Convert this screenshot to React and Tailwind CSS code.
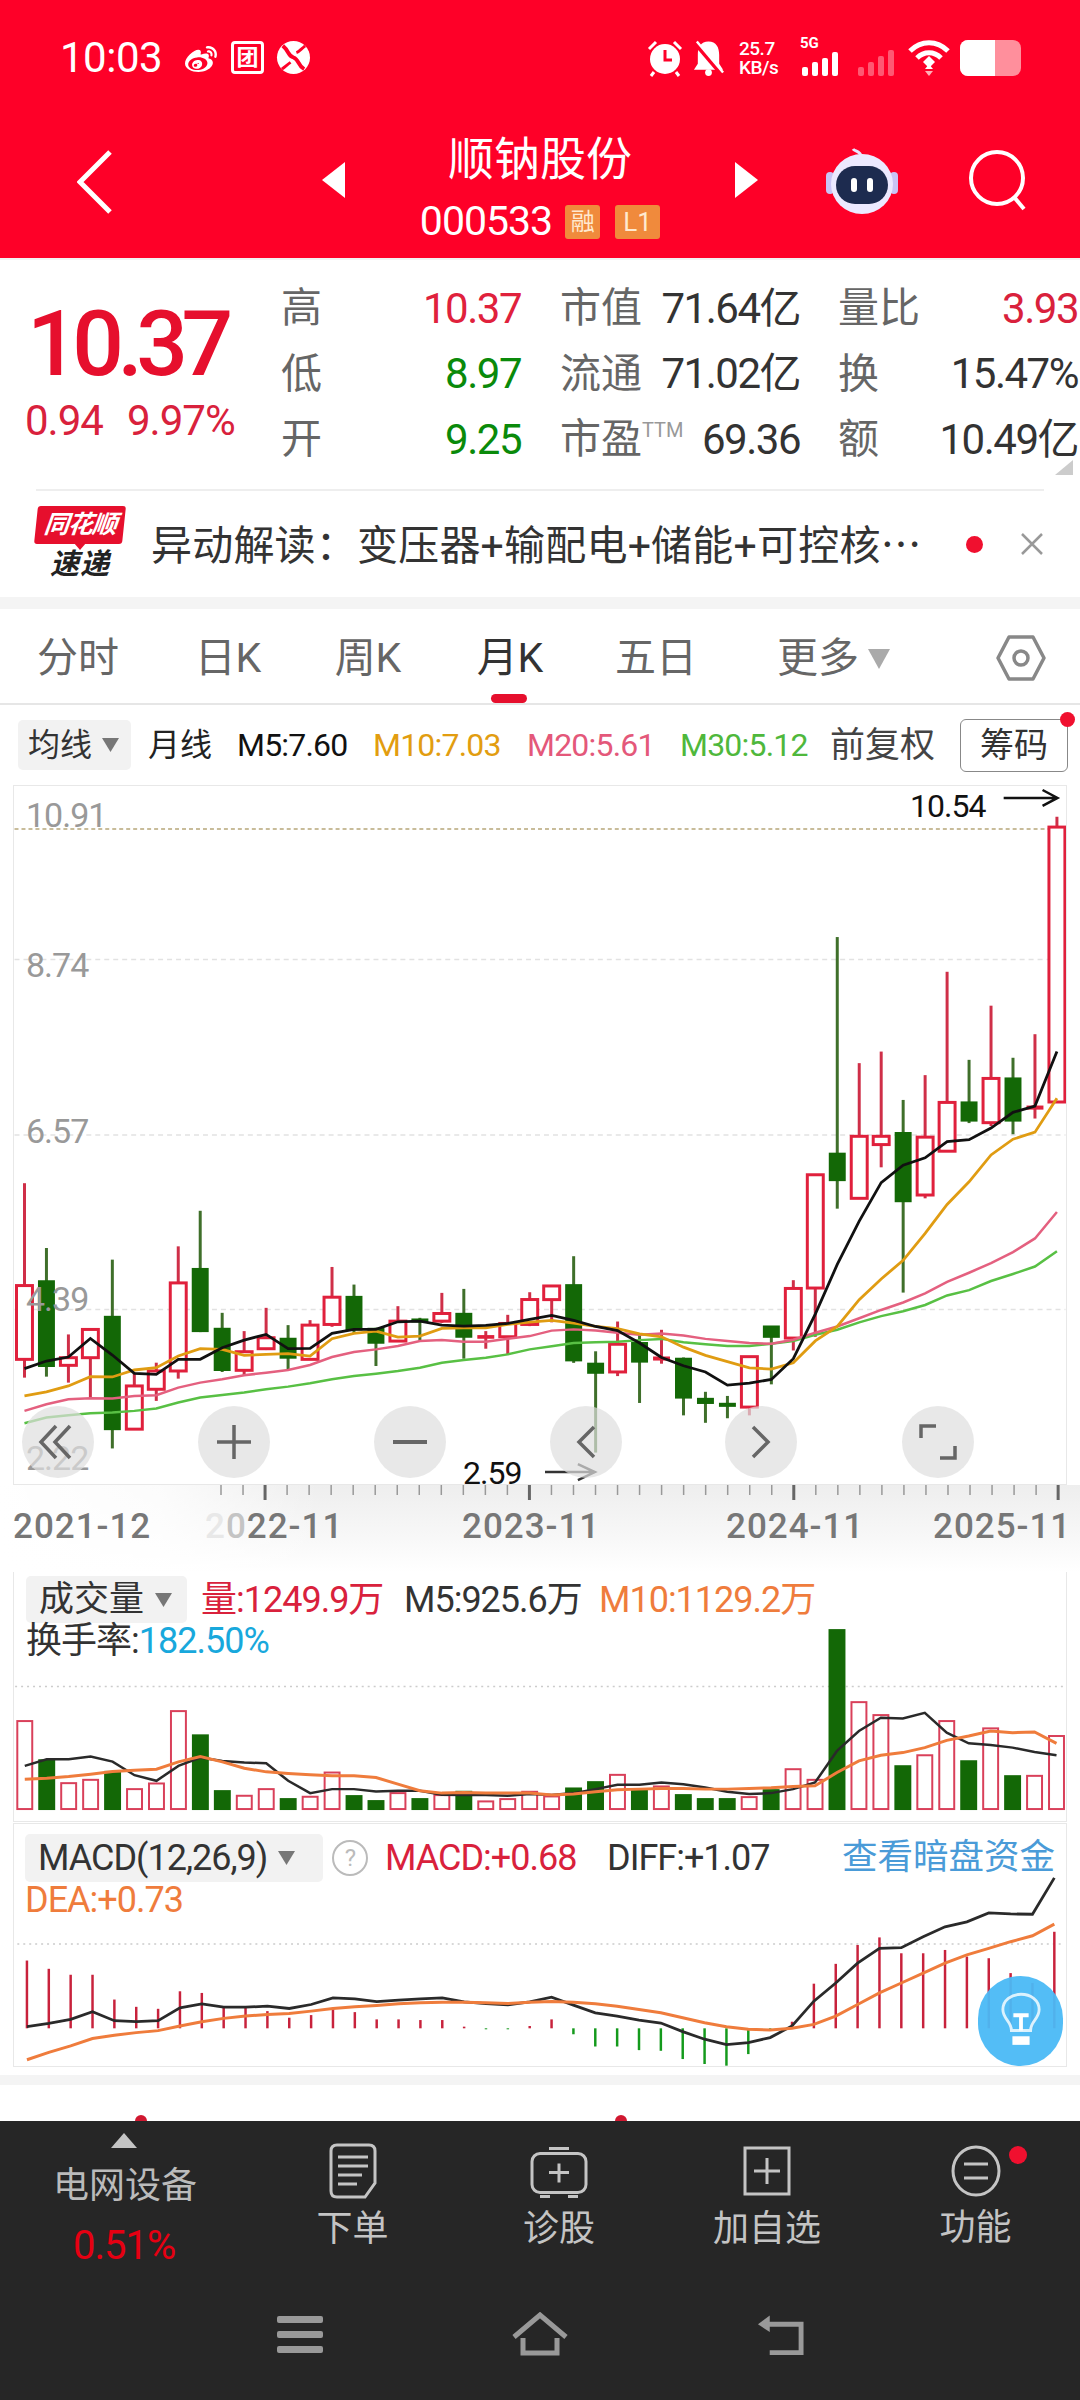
import React from 'react';
import { FaWeibo } from 'react-icons/fa';

// chart data was read off the picture, kept as y values per candle slot
const RED = '#e0203c';
const GREEN = '#136806';

const yA = z => 1130 + z / 3;
const yB = z => 900 + z / 2.412;
const candleX = i => 23 + 22.03 * i;
const barX = i => 22.7 + 22.04 * i;

// [color, high, bodyTop, bodyBottom, low]
const candlesA = [
  ['r', 160, 468, 690, 745], ['g', 355, 455, 710, 742], ['r', 615, 685, 708, 760], ['r', 600, 600, 685, 805],
  ['g', 390, 562, 900, 958], ['r', 730, 770, 900, 900], ['r', 700, 725, 780, 815], ['r', 350, 460, 725, 748],
  ['g', 243, 418, 605, 608], ['g', 550, 598, 722, 728], ['r', 605, 667, 723, 740], ['r', 535, 625, 658, 662],
  ['g', 587, 628, 685, 720], ['r', 572, 587, 690, 690], ['r', 412, 503, 585, 592], ['g', 465, 502, 600, 612],
  ['g', 595, 598, 640, 710], ['r', 530, 575, 635, 635], ['g', 565, 570, 576, 635], ['r', 490, 552, 575, 580],
  ['g', 478, 553, 622, 688], ['r', 605, 620, 625, 658], ['r', 556, 582, 622, 675], ['r', 488, 510, 585, 590],
];
const candlesB = [
  ['r', 932, 932, 965, 1020], ['g', 860, 930, 1112, 1118], ['g', 1090, 1120, 1142, 1335], ['r', 1018, 1073, 1140, 1150],
  ['g', 1050, 1070, 1115, 1215], ['r', 1038, 1105, 1110, 1120], ['g', 1105, 1108, 1202, 1245], ['g', 1188, 1205, 1215, 1263],
  ['g', 1198, 1217, 1222, 1252], ['r', 1102, 1103, 1225, 1245], ['g', 1030, 1030, 1055, 1170], ['r', 918, 938, 1058, 1088],
  ['r', 662, 663, 937, 1055], ['g', 88, 612, 676, 745], ['r', 393, 570, 720, 720], ['r', 365, 570, 590, 645],
  ['g', 482, 562, 727, 948], ['r', 422, 572, 712, 720], ['r', 172, 488, 606, 606], ['g', 385, 488, 532, 538],
  ['r', 254, 430, 537, 545], ['g', 380, 430, 532, 565], ['r', 323, 498, 503, 527], ['r', -203, -178, 487, 487],
];
const candles = [
  ...candlesA.map(c => [c[0], yA(c[1]), yA(c[2]), yA(c[3]), yA(c[4])]),
  ...candlesB.map(c => [c[0], yB(c[1]), yB(c[2]), yB(c[3]), yB(c[4])]),
];

const joinMa = (a, b) => [...a.map(yA), ...b.map(yB)].map((y, i) => `${candleX(i)},${y}`).join(' ');
const ma5 = joinMa(
  [718, 695, 683, 627, 677, 732, 735, 690, 690, 655, 632, 615, 658, 657, 612, 600, 600, 577, 575, 587, 590, 588, 582, 570],
  [1003, 1015, 1030, 1040, 1070, 1105, 1125, 1140, 1172, 1167, 1158, 1108, 1000, 880, 775, 682, 640, 622, 583, 578, 550, 512, 497, 365]
);
const ma10 = joinMa(
  [800, 788, 770, 742, 743, 722, 715, 680, 658, 660, 678, 675, 673, 680, 628, 612, 605, 623, 620, 597, 595, 595, 585, 578],
  [1015, 1022, 1030, 1035, 1048, 1055, 1080, 1100, 1115, 1130, 1133, 1118, 1065, 1030, 965, 915, 870, 805, 735, 680, 615, 577, 560, 478]
);
const ma20 = joinMa(
  [845, 825, 810, 807, 808, 800, 798, 775, 760, 750, 738, 730, 722, 707, 683, 668, 660, 650, 635, 632, 637, 637, 628, 620],
  [1040, 1037, 1040, 1045, 1050, 1047, 1052, 1060, 1065, 1070, 1072, 1062, 1045, 1030, 1010, 990, 972, 950, 922, 900, 877, 850, 817, 753]
);
const ma30 = joinMa(
  [882, 865, 858, 852, 850, 845, 838, 820, 805, 797, 790, 780, 772, 762, 750, 740, 733, 725, 715, 700, 692, 685, 675, 660],
  [1078, 1070, 1068, 1067, 1063, 1060, 1068, 1073, 1077, 1077, 1072, 1065, 1050, 1038, 1020, 1005, 993, 978, 955, 942, 920, 903, 885, 848]
);

const volBars = [
  ['r', 455], ['g', 570], ['r', 642], ['r', 632], ['g', 605], ['r', 660], ['r', 643], ['r', 425], ['g', 495], ['g', 663], ['r', 680], ['r', 660],
  ['g', 687], ['r', 683], ['r', 610], ['g', 678], ['g', 693], ['r', 672], ['g', 687], ['r', 678], ['g', 665], ['r', 697], ['r', 690], ['r', 668],
  ['r', 682], ['g', 655], ['g', 636], ['r', 617], ['g', 660], ['r', 652], ['g', 675], ['g', 687], ['g', 687], ['r', 684], ['g', 660], ['r', 600],
  ['r', 632], ['g', 178], ['r', 398], ['r', 437], ['g', 588], ['r', 558], ['r', 455], ['g', 573], ['r', 477], ['g', 618], ['r', 620], ['r', 500],
];
const lineOf = (arr, base) => arr.map((z, i) => `${barX(i)},${base + z / 3}`).join(' ');
const volM5 = lineOf([590, 570, 570, 562, 577, 618, 635, 590, 565, 575, 580, 582, 635, 672, 660, 660, 667, 665, 665, 677, 678, 678, 680, 675, 678, 672, 660, 647, 647, 640, 645, 655, 668, 675, 672, 660, 640, 545, 485, 445, 447, 430, 490, 522, 527, 535, 548, 558], 1570);
const volM10 = lineOf([630, 627, 622, 615, 607, 603, 600, 578, 562, 578, 597, 608, 613, 617, 620, 620, 625, 645, 665, 672, 670, 672, 672, 672, 678, 675, 668, 662, 660, 658, 658, 660, 660, 658, 656, 652, 650, 610, 575, 558, 550, 535, 513, 500, 485, 490, 488, 522], 1570);

const macdBars = [422, 447, 465, 465, 540, 562, 568, 515, 520, 560, 565, 575, 595, 587, 565, 578, 600, 600, 602, 602, 622, 630, 630, 620, 600, 645, 682, 682, 693, 695, 720, 735, 740, 705, 635, 607, 492, 432, 375, 352, 400, 400, 390, 410, 415, 460, 490, 335];
const diff = lineOf([622, 612, 600, 577, 604, 607, 604, 565, 553, 563, 563, 560, 567, 555, 535, 538, 546, 542, 538, 535, 547, 552, 556, 547, 533, 557, 580, 590, 602, 611, 637, 660, 676, 670, 655, 620, 545, 490, 430, 385, 383, 350, 320, 305, 278, 281, 282, 172], 1820);
const dea = lineOf([722, 700, 680, 658, 648, 640, 634, 620, 607, 597, 590, 585, 582, 575, 567, 562, 558, 553, 550, 548, 548, 550, 552, 548, 546, 548, 553, 560, 570, 580, 595, 610, 622, 630, 632, 627, 615, 590, 555, 520, 490, 460, 430, 405, 385, 365, 347, 312], 1820);

const Tri = ({ dir = 'down', className, fill = '#8a8a8a' }) => {
  const p = { down: '0,0 10,0 5,10', up: '5,0 10,10 0,10', left: '10,0 10,10 0,5', right: '0,0 10,5 0,10' }[dir];
  return (
    <svg viewBox="0 0 10 10" preserveAspectRatio="none" className={className}>
      <polygon points={p} fill={fill} />
    </svg>
  );
};

const StatusBar = () => (
  <div className="h-[115px] flex items-center pl-[60px] text-white">
    <span className="text-[42px] leading-none tracking-[-0.5px] w-[123px]">10:03</span>
    <FaWeibo className="w-[36px] h-[32px] mt-[4px]" />
    <div className="ml-[12px] w-[33px] h-[33px] border-[3px] border-white rounded-[4px] flex items-center justify-center text-[22px] leading-none font-bold">团</div>
    <svg viewBox="0 0 36 36" className="ml-[12px] w-[35px] h-[35px]">
      <circle cx="18" cy="18" r="17" fill="#fff" />
      <path d="M7 6 C14 12 12 16 18 18 C24 20 22 26 29 30" stroke="#fe0028" strokeWidth="4" fill="none" />
      <path d="M30 6 C25 10 24 12 21 13 M6 30 C10 27 12 25 15 23" stroke="#fe0028" strokeWidth="3" fill="none" />
    </svg>
    <svg viewBox="0 0 38 38" className="ml-[335px] w-[38px] h-[38px]">
      <circle cx="19" cy="20" r="15" fill="#fff" />
      <path d="M19 11v10h7" stroke="#fe0028" strokeWidth="3" fill="none" />
      <path d="M3 10 L10 3 M35 10 L28 3 M8 33 L5 37 M30 33 L33 37" stroke="#fff" strokeWidth="3" />
    </svg>
    <svg viewBox="0 0 34 38" className="ml-[8px] w-[33px] h-[38px]">
      <path d="M17 2c8 0 11 6 11 14v9l4 6H2l4-6v-9C6 8 9 2 17 2z" fill="#fff" />
      <circle cx="17" cy="34" r="3.5" fill="#fff" />
      <path d="M3 3 L31 36" stroke="#fe0028" strokeWidth="5" />
      <path d="M5 2 L32 34" stroke="#fff" strokeWidth="2.5" />
    </svg>
    <div className="ml-[14px] w-[48px] flex flex-col text-[19px] leading-[19px] tracking-[-0.5px] font-medium">
      <span className="block h-[19px]">25.7</span>
      <span className="block h-[19px]">KB/s</span>
    </div>
    <div className="relative ml-[13px] w-[45px] h-[38px]">
      <span className="absolute left-0 -top-[3px] text-[15px] leading-[15px] font-bold">5G</span>
      <svg viewBox="0 0 45 38" className="w-[45px] h-[38px]">
        <rect x="2" y="28" width="6" height="9" rx="2" fill="#fff" />
        <rect x="12" y="23" width="6" height="14" rx="2" fill="#fff" />
        <rect x="22" y="19" width="6" height="18" rx="2" fill="#fff" />
        <rect x="32" y="13" width="6" height="24" rx="2" fill="#fff" />
      </svg>
    </div>
    <svg viewBox="0 0 42 38" className="ml-[11px] w-[42px] h-[38px] opacity-35">
      <rect x="2" y="28" width="6" height="9" rx="2" fill="#fff" />
      <rect x="12" y="23" width="6" height="14" rx="2" fill="#fff" />
      <rect x="22" y="17" width="6" height="20" rx="2" fill="#fff" />
      <rect x="32" y="11" width="6" height="26" rx="2" fill="#fff" />
    </svg>
    <svg viewBox="0 0 42 38" className="ml-[10px] w-[42px] h-[38px]">
      <path d="M2 12 C13 1 29 1 40 12" stroke="#fff" strokeWidth="5" fill="none" />
      <path d="M9 19 C16 12 26 12 33 19" stroke="#fff" strokeWidth="5" fill="none" />
      <path d="M15 25 L21 19 L27 25 L21 31 Z" fill="#fff" transform="translate(0 -2)" />
      <polygon points="21,25 25,30 17,30" fill="#fff" />
      <polygon points="17,32 25,32 21,37" fill="#ffb0b8" />
    </svg>
    <div className="ml-[10px] w-[61px] h-[36px] rounded-[8px] bg-[#ff8f9c] overflow-hidden">
      <div className="w-[35px] h-full bg-white" />
    </div>
  </div>
);

const NavBar = () => (
  <div className="flex-1 flex items-center pl-[77px] text-white">
    <svg viewBox="0 0 35 64" className="w-[35px] h-[64px] -mt-[10px]">
      <path d="M33 2 L3 32 L33 62" stroke="#fff" strokeWidth="5" fill="none" />
    </svg>
    <Tri dir="left" fill="#fff" className="ml-[210px] w-[23px] h-[36px] -mt-[14px]" />
    <div className="w-[390px] flex flex-col items-center">
      <span className="text-[46px] leading-[56px]">顺钠股份</span>
      <div className="flex items-center mt-[14px]">
        <span className="text-[41px] leading-none tracking-[-1px]">000533</span>
        <span className="ml-[13px] w-[35px] h-[34px] rounded-[3px] bg-[#f08a3c] text-[#ffe9cf] text-[24px] leading-[34px] text-center">融</span>
        <span className="ml-[15px] w-[45px] h-[34px] rounded-[3px] bg-[#f08a3c] text-[#ffe9cf] text-[26px] leading-[34px] text-center">L1</span>
      </div>
    </div>
    <Tri dir="right" fill="#fff" className="w-[23px] h-[36px] -mt-[14px]" />
    <svg viewBox="0 0 74 68" className="ml-[67px] w-[74px] h-[68px] -mt-[14px]">
      <path d="M37 12 C35 4 30 6 28 3" stroke="#e8e4ff" strokeWidth="3" fill="none" />
      <rect x="1" y="26" width="8" height="22" rx="4" fill="#c9c4f5" />
      <rect x="65" y="26" width="8" height="22" rx="4" fill="#c9c4f5" />
      <ellipse cx="37" cy="38" rx="31" ry="30" fill="#ece9ff" />
      <rect x="11" y="20" width="52" height="38" rx="19" fill="#1d2b4f" />
      <rect x="26" y="32" width="6" height="14" rx="3" fill="#fff" />
      <rect x="42" y="32" width="6" height="14" rx="3" fill="#fff" />
    </svg>
    <svg viewBox="0 0 60 62" className="ml-[69px] w-[60px] h-[62px] -mt-[14px]">
      <circle cx="29" cy="29" r="26" stroke="#fff" strokeWidth="4" fill="none" />
      <path d="M46 48 L56 60" stroke="#fff" strokeWidth="4" />
    </svg>
  </div>
);

const Quote = () => {
  const rows = [
    { a: '高', av: '10.37', ac: 'text-[#e0213c]', b: '市值', bv: '71.64亿', c: '量比', cv: '3.93', cc: 'text-[#d9213c]' },
    { a: '低', av: '8.97', ac: 'text-[#0a8a0a]', b: '流通', bv: '71.02亿', c: '换', cv: '15.47%', cc: 'text-[#333]' },
    { a: '开', av: '9.25', ac: 'text-[#0a8a0a]', b: '市盈', ttm: true, bv: '69.36', c: '额', cv: '10.49亿', cc: 'text-[#333]' },
  ];
  return (
    <div className="relative h-[229px] flex">
      <div className="w-[281px] shrink-0 flex flex-col">
        <span className="ml-[27px] mt-[39px] text-[91px] leading-[90px] tracking-[-6.5px] font-medium text-[#e60f2d]">10.37</span>
        <div className="flex ml-[25px] mt-[11px] text-[42px] leading-none tracking-[-1px] text-[#d9213c]">
          <span className="w-[102px]">0.94</span>
          <span>9.97%</span>
        </div>
      </div>
      <div className="flex flex-col pt-[16px]">
        {rows.map(r => (
          <div key={r.a} className="h-[65.5px] flex items-center text-[42px] leading-none tracking-[-1.5px] text-[#333]">
            <div className="w-[240px] flex items-center justify-between">
              <span className="text-[41px] tracking-normal text-[#666]">{r.a}</span>
              <span className={r.ac}>{r.av}</span>
            </div>
            <div className="ml-[39px] w-[240px] flex items-center justify-between">
              <span className="text-[41px] tracking-normal text-[#666] flex items-start">
                {r.b}
                {r.ttm && <span className="text-[20px] mt-[1px] text-[#999]">TTM</span>}
              </span>
              <span>{r.bv}</span>
            </div>
            <div className="ml-[38px] w-[240px] flex items-center justify-between">
              <span className="text-[41px] tracking-normal text-[#666]">{r.c}</span>
              <span className={r.cc}>{r.cv}</span>
            </div>
          </div>
        ))}
      </div>
      <svg viewBox="0 0 20 16" preserveAspectRatio="none" className="absolute right-[7px] bottom-[14px] w-[18px] h-[15px]">
        <polygon points="20,0 20,16 0,16" fill="#ccc" />
      </svg>
    </div>
  );
};

const Notice = () => (
  <div className="h-[108px] mx-[36px] border-t-2 border-[#eeeeee] flex items-center relative">
    <div className="w-[88px] flex flex-col items-center -mt-[4px]">
      <div className="w-[88px] h-[38px] bg-[#e60f2d] rounded-[3px] -skew-x-6 text-white text-[25px] leading-[38px] font-bold italic text-center tracking-[-1px]">同花顺</div>
      <div className="-mt-[1px] w-0 h-0 border-l-[6px] border-r-[6px] border-t-[7px] border-l-transparent border-r-transparent border-t-[#e60f2d]" />
      <div className="text-[29px] leading-[28px] font-bold italic text-[#222] tracking-[1px]">速递</div>
    </div>
    <span className="ml-[27px] text-[41px] leading-none tracking-[0.2px] text-[#333] whitespace-nowrap">
      异动解读：变压器+输配电+储能+可控核<span className="font-['Noto_Sans_CJK_SC',sans-serif] tracking-[-4px]">…</span>
    </span>
    <div className="absolute left-[930px] w-[17px] h-[17px] rounded-full bg-[#f0102f]" />
    <svg viewBox="0 0 24 24" className="absolute right-0 w-[24px] h-[24px]">
      <path d="M2 2 L22 22 M22 2 L2 22" stroke="#999" strokeWidth="2.5" />
    </svg>
  </div>
);

const tabs = [
  { t: '分时', w: 'w-[156px]' },
  { t: '日K', w: 'w-[144px]' },
  { t: '周K', w: 'w-[136px]' },
  { t: '月K', w: 'w-[148px]', on: true },
  { t: '五日', w: 'w-[144px]' },
];

const Tabs = () => (
  <div className="h-[96px] border-b-2 border-[#e6e6e6] flex items-center pt-[4px] text-[41px] leading-none text-[#666] relative">
    {tabs.map(tab => (
      <div key={tab.t} className={`${tab.w} text-center ${tab.on ? 'text-[#333]' : ''}`}>
        {tab.t}
      </div>
    ))}
    <span className="ml-[49px]">更多</span>
    <Tri className="ml-[9px] mt-[2px] w-[22px] h-[20px]" fill="#aaa" />
    <svg viewBox="0 0 50 48" className="ml-[106px] w-[50px] h-[48px]">
      <path d="M13 3 H37 L48 24 L37 45 H13 L2 24 Z" fill="none" stroke="#888" strokeWidth="3.5" strokeLinejoin="round" />
      <circle cx="25" cy="24" r="7" fill="none" stroke="#888" strokeWidth="3.5" />
    </svg>
    <div className="absolute left-[491px] bottom-0 w-[36px] h-[9px] rounded-[5px] bg-[#e60f2d]" />
  </div>
);

const IndicatorRow = () => (
  <div className="h-[80px] flex items-center text-[32px] leading-none tracking-[-0.8px] whitespace-nowrap relative">
    <div className="ml-[18px] w-[113px] h-[50px] bg-[#f2f2f2] rounded-[5px] flex items-center pl-[10px] text-[#333] tracking-normal">
      均线
      <Tri className="ml-[10px] w-[17px] h-[14px]" fill="#777" />
    </div>
    <span className="ml-[17px] tracking-normal text-[#222]">月线</span>
    <span className="ml-[25px] w-[136px] text-[#111]">M5:7.60</span>
    <span className="w-[154px] text-[#e29d10]">M10:7.03</span>
    <span className="w-[153px] text-[#e4587a]">M20:5.61</span>
    <span className="w-[150px] text-[#4fb83c]">M30:5.12</span>
    <span className="text-[35px] tracking-normal text-[#444]">前复权</span>
    <div className="ml-[25px] w-[108px] h-[53px] border border-[#888] rounded-[6px] flex items-center justify-center text-[34px] tracking-normal text-[#333]">筹码</div>
    <div className="absolute left-[1060px] top-[7px] w-[15px] h-[15px] rounded-full bg-[#f0102f]" />
  </div>
);

const Candle = ({ c, i }) => {
  const x = candleX(i);
  const col = c[0] === 'r' ? RED : GREEN;
  const wick = c[0] === 'r' ? '#cf2f48' : '#3f6f2a';
  const thin = c[3] - c[2] < 4;
  return (
    <g>
      <line x1={x} x2={x} y1={c[1]} y2={c[2]} stroke={wick} strokeWidth="3" />
      <line x1={x} x2={x} y1={c[3]} y2={c[4]} stroke={wick} strokeWidth="3" />
      {c[0] === 'r' && !thin ? (
        <rect x={x - 8} y={c[2]} width="16" height={c[3] - c[2]} fill="#fff" stroke={col} strokeWidth="3" />
      ) : (
        <rect x={x - 8.5} y={c[2] - 1} width="17" height={c[3] - c[2] + 2} fill={col} />
      )}
    </g>
  );
};

const RoundBtn = ({ left, children }) => (
  <div className={`absolute ${left} top-[620px] w-[72px] h-[72px] rounded-full bg-[#dedede]/70 flex items-center justify-center`}>
    {children}
  </div>
);

const axisLabel = 'absolute left-[12px] text-[34px] leading-none tracking-[-1px] text-[#999]';

const MainChart = () => (
  <div className="relative mx-[13px] h-[700px] border border-[#e8e8e8] bg-white">
    <svg viewBox="13 785 1054 700" className="absolute inset-0 w-full h-full">
      {[959, 1135, 1310].map(y => (
        <line key={y} x1="13" x2="1067" y1={y} y2={y} stroke="#e2e2e2" strokeWidth="1.5" strokeDasharray="5 4" />
      ))}
      <line x1="13" x2="1067" y1="828" y2="828" stroke="#b7a77a" strokeWidth="1.5" strokeDasharray="4 3" />
      {candles.map((c, i) => (
        <Candle key={i} c={c} i={i} />
      ))}
      <polyline points={ma30} fill="none" stroke="#58c044" strokeWidth="2.5" />
      <polyline points={ma20} fill="none" stroke="#e4607f" strokeWidth="2.5" />
      <polyline points={ma10} fill="none" stroke="#e09c12" strokeWidth="2.8" />
      <polyline points={ma5} fill="none" stroke="#111" strokeWidth="2.8" />
      <path d="M1005 797 H1058 M1044 789 L1059 797 L1044 805" stroke="#111" strokeWidth="2.5" fill="none" />
      <path d="M545 1473 H594 M578 1465 L595 1473 L578 1481" stroke="#333" strokeWidth="2.5" fill="none" />
    </svg>
    <span className={`${axisLabel} top-[12px]`}>10.91</span>
    <span className={`${axisLabel} top-[162px]`}>8.74</span>
    <span className={`${axisLabel} top-[328px]`}>6.57</span>
    <span className={`${axisLabel} top-[496px]`}>4.39</span>
    <span className={`${axisLabel} top-[655px]`}>2.22</span>
    <span className="absolute left-[896px] top-[4px] text-[32px] leading-none tracking-[-1px] text-[#111]">10.54</span>
    <span className="absolute left-[449px] top-[671px] text-[32px] leading-none tracking-[-1px] text-[#111]">2.59</span>
    <RoundBtn left="left-[8px]">
      <svg viewBox="0 0 40 36" className="w-[40px] h-[36px]">
        <path d="M18 2 L3 18 L18 34 M32 2 L17 18 L32 34" stroke="#666" strokeWidth="3.5" fill="none" />
      </svg>
    </RoundBtn>
    <RoundBtn left="left-[184px]">
      <svg viewBox="0 0 34 34" className="w-[34px] h-[34px]">
        <path d="M17 0 V34 M0 17 H34" stroke="#666" strokeWidth="3.5" />
      </svg>
    </RoundBtn>
    <RoundBtn left="left-[360px]">
      <svg viewBox="0 0 34 6" className="w-[34px] h-[6px]">
        <path d="M0 3 H34" stroke="#666" strokeWidth="4" />
      </svg>
    </RoundBtn>
    <RoundBtn left="left-[536px]">
      <svg viewBox="0 0 20 34" className="w-[20px] h-[34px]">
        <path d="M18 2 L3 17 L18 32" stroke="#666" strokeWidth="3.5" fill="none" />
      </svg>
    </RoundBtn>
    <RoundBtn left="left-[711px]">
      <svg viewBox="0 0 20 34" className="w-[20px] h-[34px]">
        <path d="M2 2 L17 17 L2 32" stroke="#666" strokeWidth="3.5" fill="none" />
      </svg>
    </RoundBtn>
    <RoundBtn left="left-[888px]">
      <svg viewBox="0 0 38 36" className="w-[38px] h-[36px]">
        <path d="M2 14 V2 H17 M36 22 V34 H21" stroke="#666" strokeWidth="3.5" fill="none" />
      </svg>
    </RoundBtn>
  </div>
);

const AxisStrip = () => {
  const ticks = Array.from({ length: 39 }, (_, i) => 221 + 22.03 * i);
  return (
    <div className="relative h-[87px] bg-linear-to-b from-[#eeeeee] via-[#f6f6f6] to-white">
      <div className="absolute inset-y-0 left-0 w-[320px] bg-linear-to-r from-white via-white/80 to-transparent" />
      <svg viewBox="0 0 1080 20" className="absolute left-0 top-0 w-[1080px] h-[20px]">
        {ticks.map(x => {
          const big = [265, 529, 793, 1057].some(b => Math.abs(b - x) < 3);
          return <line key={x} x1={x} x2={x} y1="0" y2={big ? 15 : 10} stroke={big ? '#666' : '#999'} strokeWidth={big ? 3 : 1.5} />;
        })}
      </svg>
      <div className="relative flex pl-[13px] pt-[24px] text-[35px] leading-none tracking-[1px] text-[#777] whitespace-nowrap font-medium">
        <span className="w-[192px]">2021-12</span>
        <span className="w-[257px]"><span className="text-[#e8e8e8]">2</span><span className="text-[#c4c4c4]">0</span>22-11</span>
        <span className="w-[264px]">2023-11</span>
        <span className="w-[207px]">2024-11</span>
        <span>2025-11</span>
      </div>
    </div>
  );
};

const VolumePanel = () => (
  <div className="relative mx-[13px] h-[250px] border-x border-b border-[#e8e8e8]">
    <svg viewBox="13 1572 1054 250" className="absolute inset-0 w-full h-full">
      <line x1="13" x2="1067" y1="1687" y2="1687" stroke="#ccc" strokeWidth="1.5" strokeDasharray="2 4" />
      {volBars.map(([c, z], i) => {
        const top = 1570 + z / 3;
        const x = barX(i);
        return c === 'r' ? (
          <rect key={i} x={x - 7.5} y={top} width="15" height={1810 - top} fill="#fff" stroke="#d9405a" strokeWidth="2" />
        ) : (
          <rect key={i} x={x - 8.5} y={top} width="17" height={1811 - top} fill={GREEN} />
        );
      })}
      <polyline points={volM5} fill="none" stroke="#2a2a2a" strokeWidth="2.5" />
      <polyline points={volM10} fill="none" stroke="#ef7c3c" strokeWidth="3" />
    </svg>
    <div className="relative pl-[12px] pt-[4px]">
      <div className="flex items-center text-[36px] leading-none tracking-[-1px] whitespace-nowrap">
        <div className="w-[161px] h-[47px] bg-[#f2f2f2] rounded-[5px] flex items-center pl-[13px] text-[#333] text-[35px] tracking-normal">
          成交量
          <Tri className="ml-[11px] w-[17px] h-[14px]" fill="#777" />
        </div>
        <span className="ml-[14px] w-[203px] text-[#d9213c]">量:1249.9万</span>
        <span className="w-[195px] text-[#333]">M5:925.6万</span>
        <span className="text-[#ef7c3c]">M10:1129.2万</span>
      </div>
      <div className="-mt-[1px] text-[36px] leading-[38px] tracking-[-1px] text-[#333] whitespace-nowrap">
        换手率:<span className="text-[#18a8dc]">182.50%</span>
      </div>
    </div>
  </div>
);

const MacdPanel = () => (
  <div className="relative mx-[13px] mt-[1px] h-[244px] border border-[#e8e8e8]">
    <svg viewBox="13 1823 1054 244" className="absolute inset-0 w-full h-full">
      <line x1="13" x2="1067" y1="1944" y2="1944" stroke="#ccc" strokeWidth="1.5" strokeDasharray="2 4" />
      {macdBars.map((z, i) => {
        const y = 1820 + z / 3;
        const neg = (i >= 21 && i <= 22) || (i >= 25 && i <= 34);
        return <line key={i} x1={barX(i)} x2={barX(i)} y1="2029" y2={y} stroke={neg ? '#149a1c' : '#c8223c'} strokeWidth="2.5" />;
      })}
      <polyline points={diff} fill="none" stroke="#2a2a2a" strokeWidth="2.8" />
      <polyline points={dea} fill="none" stroke="#ef7c3c" strokeWidth="3" />
    </svg>
    <div className="relative pl-[11px] pt-[10px]">
      <div className="flex items-center text-[36px] leading-none tracking-[-1px] whitespace-nowrap">
        <div className="w-[298px] h-[48px] bg-[#f2f2f2] rounded-[5px] flex items-center pl-[13px] text-[#333]">
          MACD(12,26,9)
          <Tri className="ml-[11px] w-[17px] h-[14px]" fill="#777" />
        </div>
        <div className="ml-[9px] w-[36px] h-[36px] border-2 border-[#bbb] rounded-full flex items-center justify-center text-[24px] text-[#bbb]">?</div>
        <span className="ml-[17px] w-[222px] text-[#d9213c]">MACD:+0.68</span>
        <span className="w-[235px] text-[#333]">DIFF:+1.07</span>
        <span className="text-[35.5px] tracking-normal text-[#4a9bd8]">查看暗盘资金</span>
      </div>
      <div className="-mt-[1px] text-[36px] leading-[38px] tracking-[-1px] text-[#ef7c3c]">DEA:+0.73</div>
    </div>
    <div className="absolute left-[964px] top-[152px] w-[85px] h-[90px] rounded-full bg-[#4ab9f5]/95 flex items-center justify-center">
      <svg viewBox="0 0 44 60" className="w-[42px] h-[58px]">
        <path d="M12 40 C12 30 3 28 3 18 C3 8 12 2 22 2 C32 2 41 8 41 18 C41 28 32 30 32 40 Z" fill="none" stroke="#fff" strokeWidth="3" strokeOpacity=".8" />
        <path d="M14 24 H30 M22 24 V40" stroke="#fff" strokeWidth="4" />
        <rect x="13" y="46" width="18" height="9" fill="#fff" />
      </svg>
    </div>
  </div>
);

const Dock = () => {
  const label = 'mt-[8px] text-[36px] leading-[44px] text-[#c4c4c4] whitespace-nowrap';
  return (
    <div className="relative flex-1 bg-[#262626]">
      <div className="absolute left-[135px] -top-[6px] w-[12px] h-[6px] rounded-t-full bg-[#d01830]" />
      <div className="absolute left-[615px] -top-[6px] w-[12px] h-[6px] rounded-t-full bg-[#d01830]" />
      <div className="h-[173px] flex">
        <div className="w-[250px] pt-[12px] pl-[53px] flex flex-col">
          <Tri dir="up" fill="#c4c4c4" className="ml-[58px] w-[26px] h-[15px]" />
          <span className="mt-[16px] text-[36px] leading-[44px] text-[#bbb] whitespace-nowrap">电网设备</span>
          <span className="mt-[18px] ml-[20px] text-[40px] leading-none tracking-[-1px] text-[#e60012]">0.51%</span>
        </div>
        <div className="w-[205px] flex flex-col items-center pt-[22px]">
          <svg viewBox="0 0 48 56" className="w-[48px] h-[56px]">
            <path d="M8 2 H40 Q46 2 46 8 V40 L36 54 H8 Q2 54 2 48 V8 Q2 2 8 2 Z" fill="none" stroke="#c4c4c4" strokeWidth="3" />
            <path d="M9 14 H39 M9 23 H39 M9 32 H33 M9 41 H28" stroke="#c4c4c4" strokeWidth="3" />
          </svg>
          <span className={label}>下单</span>
        </div>
        <div className="w-[208px] flex flex-col items-center pt-[25px]">
          <svg viewBox="0 0 58 52" className="w-[58px] h-[53px]">
            <path d="M19 2 H39" stroke="#c4c4c4" strokeWidth="3" />
            <rect x="2" y="7" width="54" height="39" rx="8" fill="none" stroke="#c4c4c4" strokeWidth="3" />
            <path d="M29 17 V36 M19 26 H39 M10 50 H20 M38 50 H48" stroke="#c4c4c4" strokeWidth="3" />
          </svg>
          <span className={label}>诊股</span>
        </div>
        <div className="w-[208px] flex flex-col items-center pt-[25px]">
          <svg viewBox="0 0 48 50" className="w-[48px] h-[50px]">
            <rect x="2" y="2" width="44" height="46" fill="none" stroke="#c4c4c4" strokeWidth="3" />
            <path d="M24 12 V38 M11 25 H37" stroke="#c4c4c4" strokeWidth="3" />
          </svg>
          <span className="mt-[11px] text-[36px] leading-[44px] text-[#c4c4c4]">加自选</span>
        </div>
        <div className="relative w-[209px] flex flex-col items-center pt-[24px]">
          <svg viewBox="0 0 50 52" className="w-[50px] h-[52px]">
            <ellipse cx="25" cy="26" rx="23" ry="24" fill="none" stroke="#c4c4c4" strokeWidth="3" />
            <path d="M13 19 H37 M13 33 H37" stroke="#c4c4c4" strokeWidth="3" />
          </svg>
          <span className="mt-[9px] text-[36px] leading-[44px] text-[#c4c4c4]">功能</span>
          <div className="absolute left-[138px] top-[25px] w-[18px] h-[18px] rounded-full bg-[#f0102f]" />
        </div>
      </div>
      <div className="absolute left-0 right-0 top-[191px] flex items-center">
        <div className="ml-[277px] w-[46px] flex flex-col gap-[8px]">
          <div className="h-[7px] rounded-[2px] bg-[#999]" />
          <div className="h-[7px] rounded-[2px] bg-[#999]" />
          <div className="h-[7px] rounded-[2px] bg-[#999]" />
        </div>
        <svg viewBox="0 0 58 44" className="ml-[188px] w-[58px] h-[44px]">
          <path d="M3 25 L29 3 L55 25" fill="none" stroke="#999" strokeWidth="5" />
          <path d="M12 26 V41 H46 V26" fill="none" stroke="#999" strokeWidth="5" />
        </svg>
        <svg viewBox="0 0 50 44" className="ml-[187px] w-[49px] h-[44px]">
          <path d="M2 12 L14 3 V20 Z" fill="#999" />
          <path d="M10 12 H46 V41 H14" fill="none" stroke="#999" strokeWidth="5" />
        </svg>
      </div>
    </div>
  );
};

const App = () => (
  <div className="w-[1080px] h-[2400px] flex flex-col bg-white overflow-hidden font-[Roboto,'Noto_Sans_CJK_SC',sans-serif]">
    <header className="h-[258px] bg-[#fe0028] flex flex-col">
      <StatusBar />
      <NavBar />
    </header>
    <div className="h-[2px] bg-[#f2f2f2]" />
    <Quote />
    <Notice />
    <div className="h-[12px] bg-[#f4f4f4]" />
    <Tabs />
    <IndicatorRow />
    <MainChart />
    <AxisStrip />
    <VolumePanel />
    <MacdPanel />
    <div className="h-[8px]" />
    <div className="h-[10px] bg-[#f4f4f4]" />
    <div className="h-[36px]" />
    <Dock />
  </div>
);

export default App;
